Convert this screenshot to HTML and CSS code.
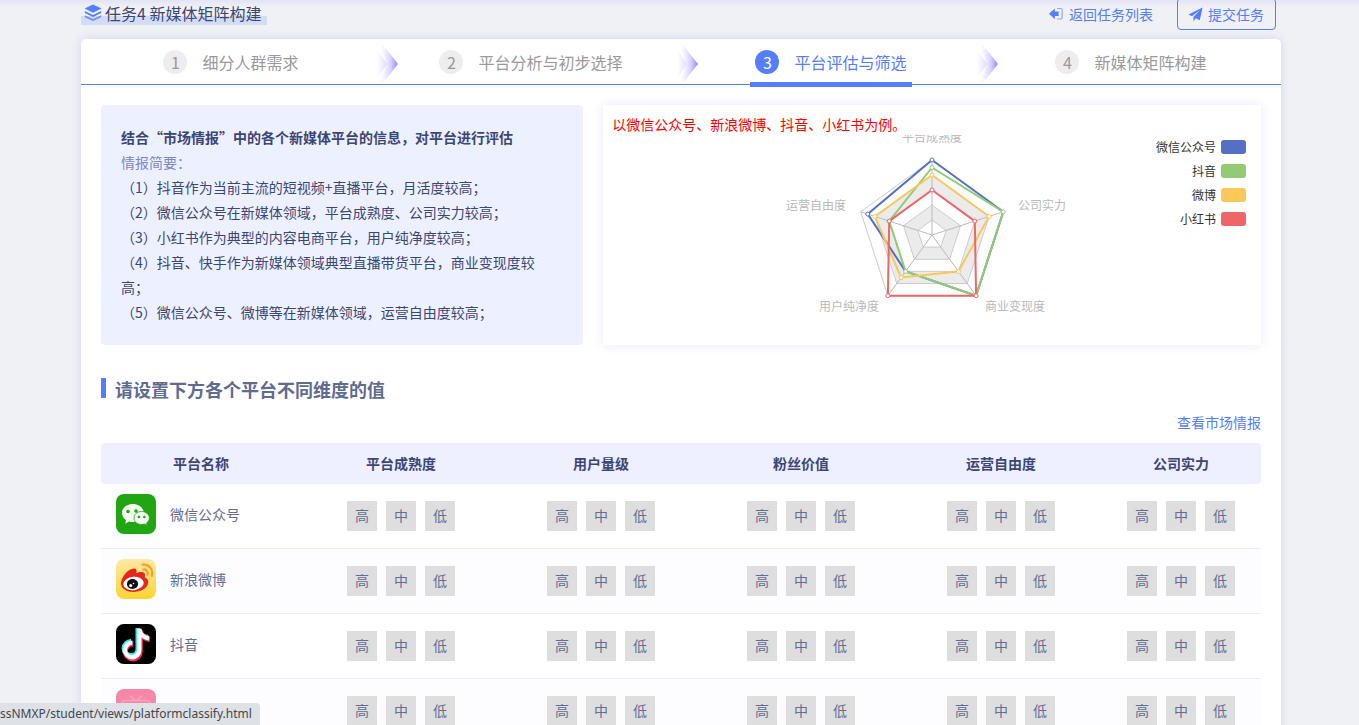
FILE: index.html
```html
<!DOCTYPE html>
<html lang="zh-CN">
<head>
  <meta charset="UTF-8" />
  <meta name="viewport" content="width=device-width, initial-scale=1.0" />
  <title>任务4 新媒体矩阵构建</title>
  <link rel="stylesheet" href="styles.css">
</head>
<body>
  <div class="container">
    <header class="top-bar">
      <h1 class="task-title">
        <svg class="icon-layers" viewBox="0 0 18 18" width="18" height="18">
          <path d="M9 0.5 L17.5 4.6 L9 8.8 L0.5 4.6 Z" fill="#557dff"/>
          <path d="M0.8 7 L9 10.9 L17.2 7 L17.2 9 L9 12.9 L0.8 9 Z" fill="#557dff"/>
          <path d="M0.8 11.2 L9 15.100 L17.2 11.2 L17.2 13.2 L9 17.100 L0.8 13.2 Z" fill="#6f91ff"/>
        </svg>
        <span>任务4 新媒体矩阵构建</span>
      </h1>
      <nav class="actions">
        <a href="#" class="back-link">
          <svg viewBox="0 0 14 14" width="14" height="14">
            <path d="M0 6.7 L5.8 1.4 V4.6 H9.6 V9 H5.8 V12.2 Z" fill="#557dff"/>
            <path d="M8 1.5 H11.5 Q13.2 1.5 13.2 3.2 V10.2 Q13.2 12 11.5 12 H8" fill="none" stroke="#8ea8fb" stroke-width="1.2"/>
          </svg>
          返回任务列表
        </a>
        <button type="button" class="submit-button">
          <svg viewBox="0 0 15 15" width="15" height="15">
            <path d="M14.6 0.4 L0.4 7.4 L3.8 9.2 L12 3 L5.4 10 L5.5 14.2 L7.8 11.3 L11.8 13.2 Z" fill="#557dff"/>
          </svg>
          提交任务
        </button>
      </nav>
    </header>

    <main class="card">
      <svg class="defs" width="0" height="0">
        <defs>
          <linearGradient id="arrow-strong" x1="0" x2="1">
            <stop offset="0.1" stop-color="#c5b8fb" stop-opacity="0"/>
            <stop offset="0.6" stop-color="#b8a8fa" stop-opacity="0.5"/>
            <stop offset="1" stop-color="#8f80fa"/>
          </linearGradient>
          <linearGradient id="arrow-soft" x1="0" x2="1">
            <stop offset="0.2" stop-color="#d3c9fb" stop-opacity="0"/>
            <stop offset="1" stop-color="#c9bdfb" stop-opacity="0.6"/>
          </linearGradient>
          <symbol id="arrow" viewBox="0 0 24 38">
            <path d="M0 1 L14 19 L0 37 L0 28 L5 19 L0 10 Z" fill="url(#arrow-soft)"/>
            <path d="M9 0 L24 19 L9 38 L5 36 L14 19 L5 2 Z" fill="url(#arrow-strong)"/>
          </symbol>
        </defs>
      </svg>

      <ol class="steps">
        <li class="step">
          <a href="#" class="step-link"><span class="step-num">1</span>细分人群需求</a>
          <svg class="step-arrow" width="24" height="38"><use href="#arrow"/></svg>
        </li>
        <li class="step">
          <a href="#" class="step-link"><span class="step-num">2</span>平台分析与初步选择</a>
          <svg class="step-arrow" width="24" height="38"><use href="#arrow"/></svg>
        </li>
        <li class="step">
          <a href="#" class="step-link active"><span class="step-num">3</span>平台评估与筛选</a>
          <svg class="step-arrow" width="24" height="38"><use href="#arrow"/></svg>
        </li>
        <li class="step">
          <a href="#" class="step-link"><span class="step-num">4</span>新媒体矩阵构建</a>
        </li>
      </ol>

      <section class="overview">
        <div class="info">
          <h2 class="info-title">结合“市场情报”中的各个新媒体平台的信息，对平台进行评估</h2>
          <p class="info-label">情报简要：</p>
          <p>（1）抖音作为当前主流的短视频+直播平台，月活度较高；</p>
          <p>（2）微信公众号在新媒体领域，平台成熟度、公司实力较高；</p>
          <p>（3）小红书作为典型的内容电商平台，用户纯净度较高；</p>
          <p>（4）抖音、快手作为新媒体领域典型直播带货平台，商业变现度较高；</p>
          <p>（5）微信公众号、微博等在新媒体领域，运营自由度较高；</p>
        </div>

        <div class="chart-card">
          <p class="chart-note">以微信公众号、新浪微博、抖音、小红书为例。</p>
          <div class="chart">
            <svg class="radar" viewBox="0 0 300 200" width="300" height="200">
              <!-- rings -->
              <g stroke="#ccc" stroke-width="1">
                <polygon points="150,25 78.7,76.8 105.9,160.7 194.1,160.7 221.3,76.8" fill="#fdfdfd"/>
                <polygon points="150,40 92.9,81.5 114.7,148.5 185.3,148.5 207.1,81.5" fill="#ebebeb"/>
                <polygon points="150,55 107.2,86.1 123.6,136.4 176.4,136.4 192.8,86.1" fill="#fdfdfd"/>
                <polygon points="150,70 121.5,90.7 132.4,124.3 167.6,124.3 178.5,90.7" fill="#ebebeb"/>
                <polygon points="150,85 135.7,95.4 141.2,112.1 158.8,112.1 164.3,95.4" fill="#fdfdfd"/>
              </g>
              <path d="M150 100 V25 M150 100 L78.7 76.8 M150 100 L105.9 160.7 M150 100 L194.1 160.7 M150 100 L221.3 76.8" stroke="#bbb" fill="none"/>
              <!-- series -->
              <g fill="none" stroke-width="2" stroke-linejoin="bevel">
                <polygon points="150,25 85.8,79.1 123.6,136.4 194.1,160.7 221.3,76.8" stroke="#5470c6"/>
                <polygon points="150,32.5 107.2,86.1 123.6,136.4 194.1,160.7 221.3,76.8" stroke="#91cc75"/>
                <polygon points="150,40 92.9,81.5 119.1,142.5 176.4,136.4 207.1,81.5" stroke="#fac858"/>
                <polygon points="150,55 107.2,86.1 105.9,160.7 194.1,160.7 192.8,86.1" stroke="#ee6666"/>
              </g>
              <g fill="#fff" stroke="#5470c6">
                <circle cx="150" cy="25" r="2"/><circle cx="85.8" cy="79.1" r="2"/>
              </g>
              <g fill="#fff" stroke="#91cc75">
                <circle cx="150" cy="32.5" r="2"/><circle cx="123.6" cy="136.4" r="2"/><circle cx="221.3" cy="76.8" r="2"/>
              </g>
              <g fill="#fff" stroke="#fac858">
                <circle cx="150" cy="40" r="2"/><circle cx="92.9" cy="81.5" r="2"/><circle cx="119.1" cy="142.5" r="2"/><circle cx="176.4" cy="136.4" r="2"/><circle cx="207.1" cy="81.5" r="2"/>
              </g>
              <g fill="#fff" stroke="#ee6666">
                <circle cx="150" cy="55" r="2"/><circle cx="107.2" cy="86.1" r="2"/><circle cx="105.9" cy="160.7" r="2"/><circle cx="194.1" cy="160.7" r="2"/><circle cx="192.8" cy="86.1" r="2"/>
              </g>
              <g class="radar-labels">
                <text x="150" y="7" text-anchor="middle">平台成熟度</text>
                <text x="64" y="75" text-anchor="end">运营自由度</text>
                <text x="97" y="176" text-anchor="end">用户纯净度</text>
                <text x="203" y="176">商业变现度</text>
                <text x="236" y="75">公司实力</text>
              </g>
            </svg>
            <ul class="legend">
              <li>微信公众号<span class="swatch blue"></span></li>
              <li>抖音<span class="swatch green"></span></li>
              <li>微博<span class="swatch yellow"></span></li>
              <li>小红书<span class="swatch red"></span></li>
            </ul>
          </div>
        </div>
      </section>

      <h2 class="section-title">请设置下方各个平台不同维度的值</h2>
      <div class="more"><a href="#">查看市场情报</a></div>

      <table class="platforms">
        <thead>
          <tr>
            <th>平台名称</th>
            <th>平台成熟度</th>
            <th>用户量级</th>
            <th>粉丝价值</th>
            <th>运营自由度</th>
            <th class="last">公司实力</th>
          </tr>
        </thead>
        <tbody>
          <tr>
            <td>
              <div class="platform">
                <svg viewBox="0 0 40 40" width="40" height="40">
                  <rect width="40" height="40" rx="8" fill="#22a513"/>
                  <path d="M17 10 C10.500 10 6 14 6 19 C6 22 7.500 24.400 10 26 L9.300 29.800 L13 27.500 C16 28.500 20 28.200 22.500 27 C27 25 28.200 22 27.800 18.500 C27.200 13.500 22.500 10 17 10 Z" fill="#f4fbf2"/>
                  <path d="M25.500 17.500 C21 17.500 18 20.500 18 24 C18 27.800 21.500 30.500 25.500 30.500 C26.700 30.500 27.600 30.300 28.500 30 L31 31.500 L30.500 29 C32.300 27.800 33.300 26 33.300 24 C33.300 20.500 30 17.500 25.500 17.500 Z" fill="#f4fbf2" stroke="#22a513" stroke-width="0.800"/>
                  <g fill="#22a513">
                    <circle cx="12" cy="17.500" r="1.800"/><circle cx="20" cy="17" r="1.800"/>
                    <circle cx="23" cy="23" r="1.300"/><circle cx="28.300" cy="23" r="1.300"/>
                  </g>
                </svg>
                微信公众号
              </div>
            </td>
            <td class="levels"></td><td class="levels"></td><td class="levels"></td><td class="levels"></td><td class="levels"></td>
          </tr>
          <tr>
            <td>
              <div class="platform">
                <svg viewBox="0 0 40 40" width="40" height="40">
                  <defs>
                    <linearGradient id="weibo-bg" x2="0" y2="1">
                      <stop offset="0" stop-color="#fde9a6"/>
                      <stop offset="1" stop-color="#fed432"/>
                    </linearGradient>
                  </defs>
                  <rect width="40" height="40" rx="8" fill="url(#weibo-bg)"/>
                  <path d="M5 25 C4.500 19 12 9.500 18 9.500 C20.500 9.500 21 11.500 20.300 14.200 C23.500 12.500 29.500 12 29 16 C29 17.500 28.600 18 28.800 18.500 C31 19.200 32.500 20.800 32.200 23.500 C31.500 29.500 24.500 33 17.500 33 C10.500 33 5.500 29.500 5 25 Z" fill="#e6251c"/>
                  <ellipse cx="17.500" cy="24.500" rx="10.300" ry="6.700" fill="#fff" transform="rotate(-7 17.500 24.500)"/>
                  <ellipse cx="16.500" cy="25" rx="5.600" ry="4.900" fill="#111"/>
                  <circle cx="14.700" cy="26.500" r="1.600" fill="#fff"/><circle cx="17.500" cy="24.500" r="0.800" fill="#fff"/>
                  <path d="M26.500 5.700 C33 4.700 37.500 10.500 35.800 17 M27.300 10.500 C30.500 10 32.500 12.800 31.600 15.800" fill="none" stroke="#f9a02c" stroke-width="2.200" stroke-linecap="round"/>
                </svg>
                新浪微博
              </div>
            </td>
            <td class="levels"></td><td class="levels"></td><td class="levels"></td><td class="levels"></td><td class="levels"></td>
          </tr>
          <tr>
            <td>
              <div class="platform">
                <svg viewBox="0 0 40 40" width="40" height="40">
                  <rect width="40" height="40" rx="8" fill="#000"/>
                  <g fill="none" stroke-width="5">
                    <path d="M22 4 V25.500 A7 7 0 1 1 15 17.500 M22 5 Q23.500 12 32 13.500" stroke="#2af0ea"/>
                    <path d="M24.300 6 V27 A7.500 7.500 0 1 1 17.300 20 M24.300 7 Q25.500 14 34 15.500" stroke="#fb2b55"/>
                    <path d="M23.300 5 V26 A7.200 7.200 0 1 1 16.300 18.800 M23.300 5 Q24.500 13 33 14.500" stroke="#fff" stroke-width="4.400"/>
                  </g>
                </svg>
                抖音
              </div>
            </td>
            <td class="levels"></td><td class="levels"></td><td class="levels"></td><td class="levels"></td><td class="levels"></td>
          </tr>
          <tr>
            <td>
              <div class="platform">
                <svg viewBox="0 0 40 40" width="40" height="40" role="img" aria-label="哔哩哔哩">
                  <rect width="40" height="40" rx="8" fill="#f786a8"/>
                  <g fill="none" stroke="#f9a5be" stroke-width="1.500" stroke-linecap="round">
                    <path d="M14 7 L19 11 M26 7 L21 11"/>
                    <rect x="5.500" y="11.500" width="29" height="21" rx="4"/>
                    <path d="M13 19 V23 M27 19 V23"/>
                  </g>
                </svg>
              </div>
            </td>
            <td class="levels"></td><td class="levels"></td><td class="levels"></td><td class="levels"></td><td class="levels"></td>
          </tr>
        </tbody>
      </table>
    </main>
  </div>

  <div class="status-bar">ssNMXP/student/views/platformclassify.html</div>

  <script>
    // every dimension gets the same three level buttons
    document.querySelectorAll('.levels').forEach(cell => {
      const group = document.createElement('div');
      group.className = 'level-group';
      ['高', '中', '低'].forEach(level => {
        const button = document.createElement('button');
        button.type = 'button';
        button.className = 'level';
        button.textContent = level;
        button.onclick = () => {
          group.querySelectorAll('.level').forEach(b => b.classList.remove('selected'));
          button.classList.add('selected');
        };
        group.appendChild(button);
      });
      cell.appendChild(group);
    });
  </script>
</body>
</html>
```

FILE: styles.css
```css
* {
  box-sizing: border-box;
}

body {
  margin: 0;
  padding-left: 3px;
  height: 100vh;
  overflow: hidden;
  font-family: "Noto Sans CJK SC", "Noto Sans", sans-serif;
  font-size: 14px;
  color: #3b4674;
  background: linear-gradient(#e2e4f6 0, #f0f1f5 7px);
}

h1, h2, p, ul, ol {
  margin: 0;
  padding: 0;
  list-style: none;
}

a {
  color: #557dff;
  text-decoration: none;
}

button {
  font-family: inherit;
  font-size: 14px;
  cursor: pointer;
}

.container {
  max-width: 1200px;
  margin: 0 auto;
}

/* top bar */
.top-bar {
  display: flex;
  justify-content: space-between;
  align-items: flex-start;
  height: 39px;
}

.task-title {
  display: flex;
  align-items: center;
  gap: 3px;
  height: 25px;
  padding: 0 6px 0 3px;
  font-size: 16px;
  font-weight: normal;
  line-height: 24px;
  background: linear-gradient(transparent 16px, #d3dcf7 16px);
}

.actions {
  display: flex;
  align-items: center;
  gap: 24px;
  margin-top: -2px;
  padding-right: 5px;
}

.back-link {
  display: flex;
  align-items: center;
  gap: 6px;
}

.submit-button {
  display: flex;
  align-items: center;
  gap: 5px;
  height: 32px;
  padding: 0 11px 0 10px;
  color: #557dff;
  background: none;
  border: 1px solid #557dff;
  border-radius: 4px;
}

/* card */
.card {
  min-height: 100vh;
  background: #fff;
  border-radius: 5px 5px 0 0;
  box-shadow: 0 0 10px rgba(85, 100, 255, 0.2);
}

.defs {
  position: absolute;
}

.steps {
  display: grid;
  grid-template-columns: repeat(4, 1fr);
  height: 46px;
  border-bottom: 1px solid #557dff;
}

.step {
  position: relative;
  display: flex;
  justify-content: center;
}

.step-link {
  position: relative;
  display: flex;
  align-items: center;
  gap: 15px;
  padding: 0 5px;
  font-size: 16px;
  color: #999;
}

.step-num {
  width: 24px;
  height: 24px;
  line-height: 24px;
  text-align: center;
  background: #ededed;
  border-radius: 50%;
}

.step-link.active {
  color: #557dff;
}

.step-link.active::after {
  content: "";
  position: absolute;
  left: 0;
  right: 0;
  bottom: -3px;
  height: 5px;
  background: #557dff;
}

.step-link.active .step-num {
  color: #fff;
  background: #557dff;
}

.step-arrow {
  position: absolute;
  top: 6px;
  right: -17px;
}

/* info + chart */
.overview {
  display: grid;
  grid-template-columns: 11fr 15fr;
  gap: 20px;
  padding: 20px 20px 0;
}

.info {
  min-height: 240px;
  padding: 20px 24px 20px 20px;
  line-height: 25px;
  background: #edf1ff;
  border-radius: 4px;
}

.info-title {
  font-size: 14px;
  line-height: 25px;
}

.info-label {
  color: #7b86c6;
}

.chart-card {
  padding: 10px 10px 10px 9px;
  box-shadow: 0 0 10px rgba(85, 100, 255, 0.14);
}

.chart-note {
  padding-bottom: 2px;
  line-height: 18px;
  color: #f00;
}

.chart {
  display: grid;
  grid-template-columns: 1fr 300px 1fr;
}

.radar {
  grid-column: 2;
  overflow: hidden;
}

.radar-labels {
  font-size: 12px;
  fill: #b9b9b9;
}

.legend {
  justify-self: end;
  padding-right: 5px;
  font-size: 12px;
  line-height: 24px;
  color: #333;
}

.legend li {
  display: flex;
  justify-content: flex-end;
  align-items: center;
  gap: 5px;
}

.swatch {
  width: 25px;
  height: 14px;
  border-radius: 3px;
}

.blue { background: #5470c6; }
.green { background: #91cc75; }
.yellow { background: #fac858; }
.red { background: #ee6666; }

/* platform table */
.section-title {
  display: flex;
  align-items: center;
  gap: 9px;
  margin: 33px 20px 0;
  font-size: 18px;
  line-height: 22px;
  color: #5f6b91;
}

.section-title::before {
  content: "";
  width: 5px;
  height: 20px;
  margin-bottom: 2px;
  background: #557dff;
}

.more {
  margin: 12px 20px 11px;
  line-height: 20px;
  text-align: right;
}

.platforms {
  width: calc(100% - 40px);
  margin: 0 20px;
  table-layout: fixed;
  border-collapse: separate;
  border-spacing: 0;
  color: #626d94;
}

.platforms th {
  height: 41px;
  padding: 0 0 2px;
  color: #3b4674;
  background: #eeefff;
}

.platforms th:first-child {
  border-radius: 4px 0 0 4px;
}

.platforms th.last {
  width: 160px;
  border-radius: 0 4px 4px 0;
}

.platforms td {
  padding: 10px 0 14px;
  border-bottom: 1px solid #ebedfb;
}

.platforms tbody tr:nth-child(even) {
  background: #fdfdff;
}

.platforms td.levels {
  padding: 12px 0;
}

.platform {
  display: flex;
  align-items: center;
  gap: 14px;
  padding-left: 15px;
}

.level-group {
  display: flex;
  justify-content: center;
  gap: 9px;
}

.level {
  width: 30px;
  height: 30px;
  padding: 0 0 2px;
  color: #626d94;
  background: #dedede;
  border: none;
}

.level.selected {
  color: #fff;
  background: #557dff;
}

.status-bar {
  position: fixed;
  left: 0;
  bottom: 0;
  padding-right: 8px;
  font-family: "Noto Sans", sans-serif;
  font-size: 12px;
  line-height: 22px;
  color: #44474c;
  background: #dee1e6;
  border-radius: 0 4px 0 0;
}
```
